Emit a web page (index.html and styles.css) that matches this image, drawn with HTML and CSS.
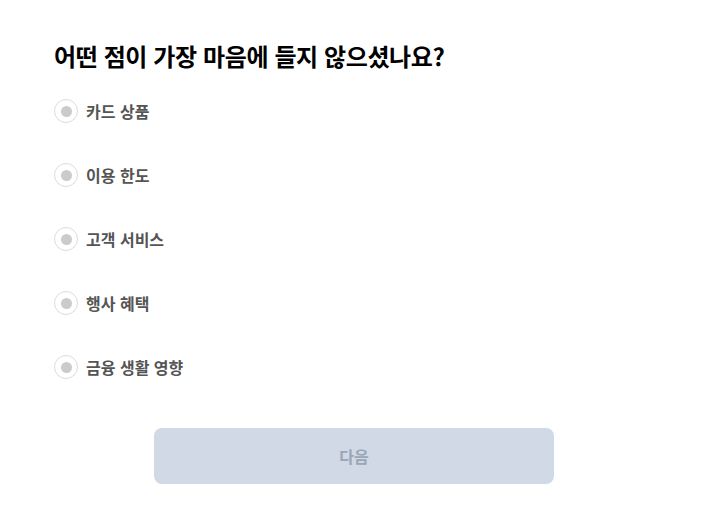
FILE: index.html
```html
<!DOCTYPE html>
<html lang="ko">
<head>
<meta charset="utf-8">
<link rel="stylesheet" href="styles.css">
</head>
<body>
<main class="survey">
  <h1 class="title">어떤 점이 가장 마음에 들지 않으셨나요?</h1>
  <ul class="options">
    <li class="option"><span class="radio"><span class="dot"></span></span><span class="label">카드 상품</span></li>
    <li class="option"><span class="radio"><span class="dot"></span></span><span class="label">이용 한도</span></li>
    <li class="option"><span class="radio"><span class="dot"></span></span><span class="label">고객 서비스</span></li>
    <li class="option"><span class="radio"><span class="dot"></span></span><span class="label">행사 혜택</span></li>
    <li class="option"><span class="radio"><span class="dot"></span></span><span class="label">금융 생활 영향</span></li>
  </ul>
  <div class="actions">
    <button class="next" disabled>다음</button>
  </div>
</main>
</body>
</html>
```
FILE: styles.css
```css
* { box-sizing: border-box; }
html, body { margin: 0; padding: 0; background: #fff; }
body {
  font-family: "Noto Sans CJK KR", "Noto Sans", sans-serif;
  color: #111;
}
.survey {
  width: 708px;
  padding: 40px 0 0 54px;
}
.title {
  margin: 0;
  font-size: 24px;
  font-weight: 700;
  line-height: 32px;
  letter-spacing: -0.4px;
  color: #000;
}
.options {
  list-style: none;
  margin: 0;
  padding: 0;
  margin-top: 27px;
  display: flex;
  flex-direction: column;
  gap: 40px;
}
.option {
  display: flex;
  align-items: center;
  gap: 8px;
  height: 24px;
}
.radio {
  width: 24px;
  height: 24px;
  border-radius: 50%;
  border: 1px solid #dcdcdc;
  display: flex;
  align-items: center;
  justify-content: center;
  flex: none;
}
.dot {
  width: 11px;
  height: 11px;
  border-radius: 50%;
  background: #cbcbcb;
}
.label {
  font-size: 16px;
  font-weight: 700;
  color: #555;
}
.actions {
  margin-top: 49px;
  padding-left: 100px;
}
.next {
  width: 400px;
  height: 56px;
  border: none;
  border-radius: 8px;
  background: #d0d9e5;
  color: #9aa5b5;
  font-family: "Noto Sans CJK KR", sans-serif;
  font-size: 16px;
  font-weight: 700;
}
```
